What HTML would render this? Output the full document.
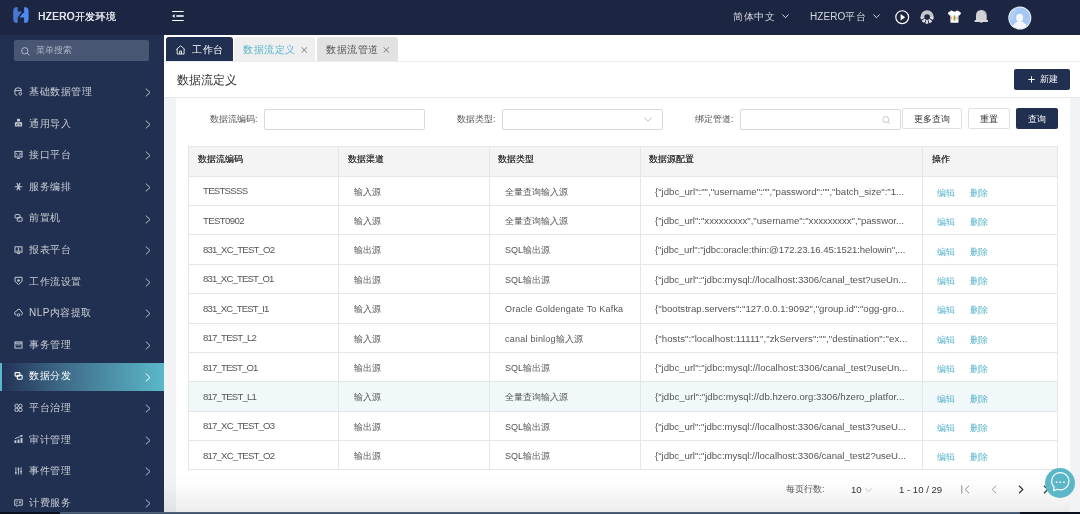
<!DOCTYPE html>
<html><head><meta charset="utf-8">
<style>
*{box-sizing:border-box;margin:0;padding:0}
html,body{width:1080px;height:514px;overflow:hidden;background:#fff;font-family:"Liberation Sans",sans-serif;}
.a{position:absolute}
.t{position:absolute;white-space:nowrap;line-height:1;will-change:transform}
#hdr{left:0;top:0;width:1080px;height:34.5px;background:#1c2541}
#side{left:0;top:34.5px;width:164px;height:480px;background:#213050}
.mi{position:absolute;left:0;width:164px;height:28.5px}
.mi .tx{position:absolute;will-change:transform;left:29px;top:-0.2px;line-height:28.5px;font-size:10px;letter-spacing:0.5px;color:#c9cdd6;white-space:nowrap}
.mi svg.ic{position:absolute;left:13.5px;top:8.7px}
.mi svg.ar{position:absolute;left:145px;top:10px}
.mi.act{background:linear-gradient(90deg,#223154 0%,#3f6d8a 40%,#5bb8ca 100%)}
.mi.act:before{content:"";position:absolute;left:0;top:0;width:2px;height:100%;background:#5ab8cc}
.mi.act .tx{color:#fff}
</style></head><body>
<!-- HEADER -->
<div id="hdr" class="a">
  <svg class="a" style="left:13px;top:7px" width="16" height="16" viewBox="0 0 16 16">
    <path d="M4.7,0.2 V4.5 H8.9 L5.2,10 H4.7 V15.8 H2.4 Q0.2,15 0.2,12.2 V3.8 Q0.2,1 2.4,0.2Z" fill="#4778d4"/>
    <path d="M11.1,0.2 H13.4 Q15.6,1 15.6,3.8 V12.2 Q15.6,15 13.4,15.8 H11.1 V10.4 H6.5 L10.1,5.9 H11.1Z" fill="#5089ee"/>
  </svg>
  <div class="t" style="left:37.5px;top:11.5px;font-size:10px;letter-spacing:0.35px;color:#e8eaf0;text-shadow:0.35px 0 0 #e8eaf0">HZERO开发环境</div>
  <svg class="a" style="left:172px;top:11px" width="12" height="11" viewBox="0 0 12 11">
    <rect x="0" y="0" width="11.8" height="1.1" rx="0.5" fill="#fff"/>
    <rect x="4.2" y="4.1" width="7.6" height="1.8" rx="0.4" fill="#cfd2da"/>
    <rect x="0" y="8.9" width="11.8" height="1.1" rx="0.5" fill="#fff"/>
    <path d="M0,5 L2.6,3.3 V6.7Z" fill="#fff"/>
  </svg>
  <div class="t" style="left:733px;top:11.5px;font-size:10px;letter-spacing:0.5px;color:#d4d8e0">简体中文</div>
  <svg class="a" style="left:781.5px;top:14px" width="7" height="5" viewBox="0 0 7 5"><path d="M0.5,0.5 L3.5,3.8 L6.5,0.5" stroke="#cfd3dc" stroke-width="1" fill="none"/></svg>
  <div class="t" style="left:810px;top:11.5px;font-size:10px;letter-spacing:0.1px;color:#d4d8e0">HZERO平台</div>
  <svg class="a" style="left:873px;top:14px" width="7" height="5" viewBox="0 0 7 5"><path d="M0.5,0.5 L3.5,3.8 L6.5,0.5" stroke="#cfd3dc" stroke-width="1" fill="none"/></svg>
  <!-- play -->
  <svg class="a" style="left:894px;top:8.5px" width="16" height="16" viewBox="0 0 16 16">
    <circle cx="8.2" cy="8.2" r="6.4" stroke="#fff" stroke-width="1.15" fill="none"/>
    <path d="M6.6,5.1 L11.2,8.3 L6.6,11.6Z" fill="#fff"/>
  </svg>
  <!-- ring -->
  <svg class="a" style="left:919px;top:8.5px" width="16" height="16" viewBox="0 0 16 16">
    <path d="M3.35,8 A4.75,4.75 0 0 1 12.85,8" stroke="#c3c6cc" stroke-width="3.8" fill="none"/>
    <path d="M12.85,8 A4.75,4.75 0 0 1 3.35,8" stroke="#dfe1e5" stroke-width="3.8" stroke-dasharray="2.3 0.85" fill="none"/>
  </svg>
  <!-- shirt -->
  <svg class="a" style="left:947px;top:10px" width="15" height="13" viewBox="0 0 15 13">
    <path d="M4.2,0.6 Q5,0.3 5.6,0.9 Q7.4,2.2 9.2,0.9 Q9.9,0.3 10.7,0.6 L13.6,2.6 Q14.3,3.1 13.8,3.8 L12.5,5.6 L11.5,5.2 V12.3 Q11.5,12.7 11,12.7 H4 Q3.4,12.7 3.4,12.2 V5.2 L2.4,5.6 L1.1,3.8 Q0.6,3.1 1.3,2.6Z" fill="#fff"/>
    <rect x="4.3" y="6.6" width="0.9" height="3" rx="0.45" fill="#ee8a8a"/>
    <rect x="5.9" y="5.9" width="1" height="4.4" rx="0.5" fill="#f3c35a"/>
    <rect x="7" y="5.1" width="1" height="6" rx="0.5" fill="#63c27a"/>
    <rect x="8.1" y="5.9" width="1" height="4.4" rx="0.5" fill="#f3c35a"/>
    <rect x="9.7" y="6.6" width="0.9" height="3" rx="0.45" fill="#ee8a8a"/>
  </svg>
  <!-- bell -->
  <svg class="a" style="left:974px;top:8.5px" width="15" height="15" viewBox="0 0 15 15">
    <path d="M6.6,1.2 Q7.3,0.3 8,1.2Z" fill="#d2d3d6"/>
    <path d="M2,11 V6.8 Q2,1.4 7.3,1.1 Q12.7,1.4 12.7,6.8 V11Z" fill="#d2d3d6"/>
    <path d="M0.6,11.1 H14 Q14.4,12.9 13.6,12.9 H1.1 Q0.2,12.9 0.6,11.1Z" fill="#d8d9dc"/>
    <path d="M6,13 Q7.3,14.7 8.7,13Z" fill="#d2d3d6"/>
    <path d="M9.8,2.4 Q11,3.2 11.4,4.8" stroke="#8d92a0" stroke-width="0.8" fill="none"/>
  </svg>
  <!-- avatar -->
  <svg class="a" style="left:1008px;top:6px" width="24" height="24" viewBox="0 0 24 24">
    <circle cx="11.8" cy="12" r="11.5" fill="#eef2f8"/>
    <circle cx="11.8" cy="12" r="10.6" fill="#a6c7f2"/>
    <path d="M2,9 Q4,3 10,1.5 Q6,6 6,12 Q4,14 2,14Z" fill="#b8d3f6" opacity="0.7"/>
    <ellipse cx="11.6" cy="11.8" rx="3.5" ry="4.1" fill="#f4f7fd"/>
    <path d="M4.8,20.5 Q5.8,16.6 10,15.4 L10.3,14.6 H13 L13.3,15.4 Q17.6,16.6 18.6,20.5 Q15.5,22.8 11.7,22.8 Q7.9,22.8 4.8,20.5Z" fill="#f4f7fd"/>
  </svg>
</div>

<!-- SIDEBAR -->
<div id="side" class="a">
  <div class="a" style="left:13.5px;top:5.5px;width:135.5px;height:21px;background:#485573;border-radius:2px"></div>
  <svg class="a" style="left:21px;top:12px" width="9" height="9" viewBox="0 0 9 9"><circle cx="3.8" cy="3.8" r="3.2" stroke="#b8bfcc" stroke-width="0.9" fill="none"/><path d="M6.1,6.1 L8.5,8.5" stroke="#b8bfcc" stroke-width="0.9"/></svg>
  <div class="t" style="left:36px;top:11.5px;font-size:9px;color:#aeb5c3">菜单搜索</div>
  <div class="mi" style="top:43.70px"><svg class="ic" width="9" height="9" viewBox="0 0 9 9"><path d="M7.4,4.3 V3.2 Q7.4,0.8 4.1,0.8 Q0.9,0.8 0.9,3.2 V6.2 Q0.9,8.3 3.2,8.3" stroke="#c3c8d3" stroke-width="1" fill="none"/><path d="M0.9,3.6 H7.4" stroke="#c3c8d3" stroke-width="1" fill="none"/><circle cx="6.3" cy="6.7" r="1.35" stroke="#c3c8d3" stroke-width="1" fill="none"/></svg><div class="tx">基础数据管理</div><svg class="ar" width="6" height="9" viewBox="0 0 6 9"><path d="M0.8,0.6 L5,4.5 L0.8,8.4" stroke="#b9bfcb" stroke-width="1" fill="none"/></svg></div>
<div class="mi" style="top:75.30px"><svg class="ic" width="9" height="9" viewBox="0 0 9 9"><rect x="2.9" y="0.8" width="3.2" height="2.8" rx="1" fill="#c3c8d3"/><path d="M0.9,8.4 V5.3 Q0.9,4 2.2,4 H6.8 Q8.1,4 8.1,5.3 V8.4Z" fill="#c3c8d3"/><circle cx="3" cy="6.8" r="0.75" fill="#213050"/><circle cx="6" cy="6.8" r="0.75" fill="#213050"/><path d="M2.8,5.1 H6.2" stroke="#213050" stroke-width="0.5"/></svg><div class="tx">通用导入</div><svg class="ar" width="6" height="9" viewBox="0 0 6 9"><path d="M0.8,0.6 L5,4.5 L0.8,8.4" stroke="#b9bfcb" stroke-width="1" fill="none"/></svg></div>
<div class="mi" style="top:106.90px"><svg class="ic" width="9" height="9" viewBox="0 0 9 9"><rect x="1" y="1.4" width="7" height="5.6" stroke="#c3c8d3" stroke-width="1" fill="none"/><path d="M3,8.4 H6" stroke="#c3c8d3" stroke-width="1" fill="none"/><path d="M2.4,3.2 L3.8,5.6 M5.9,2.6 V6.2 M6.9,3 V4.8" stroke="#c3c8d3" stroke-width="0.8"/></svg><div class="tx">接口平台</div><svg class="ar" width="6" height="9" viewBox="0 0 6 9"><path d="M0.8,0.6 L5,4.5 L0.8,8.4" stroke="#b9bfcb" stroke-width="1" fill="none"/></svg></div>
<div class="mi" style="top:138.50px"><svg class="ic" width="9" height="9" viewBox="0 0 9 9"><path d="M0.7,4.7 H8.3 M2.9,1.1 L4.5,4.7 L6.1,1.1 M2.9,8.3 L4.5,4.7 L6.1,8.3" stroke="#c3c8d3" stroke-width="1.15" fill="none"/></svg><div class="tx">服务编排</div><svg class="ar" width="6" height="9" viewBox="0 0 6 9"><path d="M0.8,0.6 L5,4.5 L0.8,8.4" stroke="#b9bfcb" stroke-width="1" fill="none"/></svg></div>
<div class="mi" style="top:170.10px"><svg class="ic" width="9" height="9" viewBox="0 0 9 9"><rect x="1.1" y="1.6" width="4.8" height="3.5" rx="0.6" stroke="#c3c8d3" stroke-width="1" fill="none"/><rect x="3.3" y="4.4" width="4.8" height="3.8" rx="0.6" stroke="#c3c8d3" stroke-width="1" fill="none"/></svg><div class="tx">前置机</div><svg class="ar" width="6" height="9" viewBox="0 0 6 9"><path d="M0.8,0.6 L5,4.5 L0.8,8.4" stroke="#b9bfcb" stroke-width="1" fill="none"/></svg></div>
<div class="mi" style="top:201.70px"><svg class="ic" width="9" height="9" viewBox="0 0 9 9"><rect x="1" y="1.8" width="7" height="5.4" stroke="#c3c8d3" stroke-width="1" fill="none"/><path d="M3,8.4 H6" stroke="#c3c8d3" stroke-width="1" fill="none"/><path d="M2.3,6 H6.7 M4.5,3.1 V6 M3.7,3.1 H5.3" stroke="#c3c8d3" stroke-width="0.8"/></svg><div class="tx">报表平台</div><svg class="ar" width="6" height="9" viewBox="0 0 6 9"><path d="M0.8,0.6 L5,4.5 L0.8,8.4" stroke="#b9bfcb" stroke-width="1" fill="none"/></svg></div>
<div class="mi" style="top:233.30px"><svg class="ic" width="9" height="9" viewBox="0 0 9 9"><path d="M1,1.3 H8 V5.3 L4.5,8.5 L1,5.3Z" stroke="#c3c8d3" stroke-width="1" fill="none"/><circle cx="4.5" cy="4.5" r="1.3" fill="#c3c8d3"/></svg><div class="tx">工作流设置</div><svg class="ar" width="6" height="9" viewBox="0 0 6 9"><path d="M0.8,0.6 L5,4.5 L0.8,8.4" stroke="#b9bfcb" stroke-width="1" fill="none"/></svg></div>
<div class="mi" style="top:264.90px"><svg class="ic" width="9" height="9" viewBox="0 0 9 9"><path d="M2.3,7.2 Q0.4,6.7 0.6,4.8 Q0.9,3.4 2.5,3.2 Q3.2,1.1 5,1.2 Q6.8,1.5 7,3.4 Q8.6,3.9 8.4,5.6 Q8.2,6.9 7.1,7.2" stroke="#c3c8d3" stroke-width="1" fill="none"/><circle cx="4.5" cy="6.9" r="1.25" stroke="#c3c8d3" stroke-width="1" fill="none"/></svg><div class="tx">NLP内容提取</div><svg class="ar" width="6" height="9" viewBox="0 0 6 9"><path d="M0.8,0.6 L5,4.5 L0.8,8.4" stroke="#b9bfcb" stroke-width="1" fill="none"/></svg></div>
<div class="mi" style="top:296.50px"><svg class="ic" width="9" height="9" viewBox="0 0 9 9"><rect x="1" y="1.9" width="7" height="6.2" stroke="#c3c8d3" stroke-width="1" fill="none"/><path d="M1,3.2 H8" stroke="#c3c8d3" stroke-width="1" fill="none"/><path d="M2.3,4.9 H6.7" stroke="#c3c8d3" stroke-width="0.8"/></svg><div class="tx">事务管理</div><svg class="ar" width="6" height="9" viewBox="0 0 6 9"><path d="M0.8,0.6 L5,4.5 L0.8,8.4" stroke="#b9bfcb" stroke-width="1" fill="none"/></svg></div>
<div class="mi act" style="top:328.10px"><svg class="ic" width="9" height="9" viewBox="0 0 9 9"><rect x="1.1" y="1.6" width="4.8" height="3.5" rx="0.6" stroke="#fff" stroke-width="1.1" fill="none"/><rect x="3.3" y="4.4" width="4.8" height="3.8" rx="0.6" stroke="#fff" stroke-width="1.1" fill="none"/></svg><div class="tx">数据分发</div><svg class="ar" width="6" height="9" viewBox="0 0 6 9"><path d="M0.8,0.6 L5,4.5 L0.8,8.4" stroke="#fff" stroke-width="1" fill="none"/></svg></div>
<div class="mi" style="top:359.70px"><svg class="ic" width="9" height="9" viewBox="0 0 9 9"><circle cx="2.6" cy="2.9" r="1.75" stroke="#c3c8d3" stroke-width="1" fill="none"/><circle cx="6.4" cy="2.9" r="1.75" stroke="#c3c8d3" stroke-width="1" fill="none"/><circle cx="2.6" cy="6.9" r="1.75" stroke="#c3c8d3" stroke-width="1" fill="none"/><circle cx="6.4" cy="6.9" r="1.75" stroke="#c3c8d3" stroke-width="1" fill="none"/></svg><div class="tx">平台治理</div><svg class="ar" width="6" height="9" viewBox="0 0 6 9"><path d="M0.8,0.6 L5,4.5 L0.8,8.4" stroke="#b9bfcb" stroke-width="1" fill="none"/></svg></div>
<div class="mi" style="top:391.30px"><svg class="ic" width="9" height="9" viewBox="0 0 9 9"><path d="M1.4,9 V6.3 M4.5,9 V5.4 M7.5,9 V4" stroke="#c3c8d3" stroke-width="1.9"/><path d="M1,4.8 Q3,3.4 6,2.8" stroke="#c3c8d3" stroke-width="1" fill="none"/><path d="M6.3,1 H8.4 V2.8 H6.3Z" fill="#c3c8d3"/></svg><div class="tx">审计管理</div><svg class="ar" width="6" height="9" viewBox="0 0 6 9"><path d="M0.8,0.6 L5,4.5 L0.8,8.4" stroke="#b9bfcb" stroke-width="1" fill="none"/></svg></div>
<div class="mi" style="top:422.90px"><svg class="ic" width="9" height="9" viewBox="0 0 9 9"><path d="M1.9,1.3 V8.6 M4.5,1.3 V8.6 M7.1,1.3 V8.6" stroke="#c3c8d3" stroke-width="0.9"/><path d="M0.8,6.7 L1.9,5.7 L3,6.7 L1.9,7.7Z M5.9,5.7 L7.1,4.7 L8.2,5.7 L7.1,6.7Z" fill="#c3c8d3"/><rect x="3.6" y="2" width="1.8" height="2.2" rx="0.8" fill="#c3c8d3"/></svg><div class="tx">事件管理</div><svg class="ar" width="6" height="9" viewBox="0 0 6 9"><path d="M0.8,0.6 L5,4.5 L0.8,8.4" stroke="#b9bfcb" stroke-width="1" fill="none"/></svg></div>
<div class="mi" style="top:454.50px"><svg class="ic" width="9" height="9" viewBox="0 0 9 9"><path d="M0.7,1.8 H8.3 V7.2 H4.2 L3,8.4 L2.4,7.2 H0.7Z" stroke="#c3c8d3" stroke-width="1" fill="none"/><path d="M2.1,3.7 H3.7 M2.1,5.3 H3.7" stroke="#c3c8d3" stroke-width="0.8"/><path d="M5.9,3 Q6.8,3 6.8,3.9 Q6.8,4.8 5.9,6 Q5,4.8 5,3.9 Q5,3 5.9,3Z" fill="#c3c8d3"/></svg><div class="tx">计费服务</div><svg class="ar" width="6" height="9" viewBox="0 0 6 9"><path d="M0.8,0.6 L5,4.5 L0.8,8.4" stroke="#b9bfcb" stroke-width="1" fill="none"/></svg></div>
</div>

<!-- TABS -->
<div class="a" style="left:166px;top:37px;width:66.5px;height:24px;background:#213050;border-radius:3px 3px 0 0"></div>
<svg class="a" style="left:176px;top:44.5px" width="10" height="10" viewBox="0 0 10 10"><path d="M0.3,4.5 L4.6,0.7 L8.9,4.5" stroke="#fff" stroke-width="0.85" fill="none" stroke-linejoin="round"/><path d="M1.2,4 V9 H8.1 V4 M3.7,9 V6 H5.5 V9" stroke="#fff" stroke-width="0.85" fill="none"/></svg>
<div class="t" style="left:192px;top:45px;font-size:10px;letter-spacing:0.5px;color:#fff">工作台</div>
<div class="a" style="left:234px;top:37px;width:81px;height:24px;background:#efefef;border-radius:3px 3px 0 0"></div>
<div class="t" style="left:243px;top:45px;font-size:10px;letter-spacing:0.5px;color:#5ab6cb">数据流定义</div>
<svg class="a" style="left:300.8px;top:47px" width="6.5" height="6" viewBox="0 0 6.5 6"><path d="M0.5,0.3 L6,5.7 M6,0.3 L0.5,5.7" stroke="#777" stroke-width="0.9"/></svg>
<div class="a" style="left:317px;top:37px;width:81px;height:24px;background:#e2e2e2;border-radius:3px 3px 0 0"></div>
<div class="t" style="left:326px;top:45px;font-size:10px;letter-spacing:0.5px;color:#555">数据流管道</div>
<svg class="a" style="left:383.3px;top:47px" width="6.5" height="6" viewBox="0 0 6.5 6"><path d="M0.5,0.3 L6,5.7 M6,0.3 L0.5,5.7" stroke="#777" stroke-width="0.9"/></svg>
<div class="a" style="left:164px;top:61px;width:916px;height:1px;background:#ececec"></div>

<!-- PAGE HEADER -->
<div class="t" style="left:176.5px;top:74px;font-size:12px;color:#333">数据流定义</div>
<div class="a" style="left:1014px;top:69px;width:56px;height:21px;background:#213050;border-radius:2px"></div>
<svg class="a" style="left:1028px;top:75.5px" width="7" height="7" viewBox="0 0 7 7"><path d="M3.5,0.3 V6.7 M0.3,3.5 H6.7" stroke="#fff" stroke-width="1"/></svg>
<div class="t" style="left:1040px;top:75px;font-size:9px;color:#fff">新建</div>
<div class="a" style="left:164px;top:97px;width:916px;height:1px;background:#e8e8e8"></div>
<div class="a" style="left:164px;top:98px;width:12px;height:414px;background:#f2f3f5"></div>
<div class="a" style="left:1070px;top:98px;width:10px;height:414px;background:#f2f3f5"></div>

<!-- FILTERS -->
<div class="t" style="left:210px;top:114.5px;font-size:9px;color:#555">数据流编码:</div>
<div class="a" style="left:264px;top:109px;width:161px;height:21px;border:1px solid #d9d9d9;border-radius:2px"></div>
<div class="t" style="left:457px;top:114.5px;font-size:9px;color:#555">数据类型:</div>
<div class="a" style="left:502px;top:109px;width:161px;height:21px;border:1px solid #d9d9d9;border-radius:2px"></div>
<svg class="a" style="left:644px;top:117px" width="8" height="5" viewBox="0 0 8 5"><path d="M0.5,0.5 L4,4.2 L7.5,0.5" stroke="#bbb" stroke-width="0.9" fill="none"/></svg>
<div class="t" style="left:695px;top:114.5px;font-size:9px;color:#555">绑定管道:</div>
<div class="a" style="left:740px;top:109px;width:160.5px;height:21px;border:1px solid #d9d9d9;border-radius:2px"></div>
<svg class="a" style="left:881.5px;top:115.5px" width="9" height="8" viewBox="0 0 9 8"><circle cx="3.8" cy="3.6" r="3" stroke="#bbb" stroke-width="0.8" fill="none"/><path d="M6,5.8 L8,7.8" stroke="#bbb" stroke-width="0.8"/></svg>
<div class="a" style="left:902px;top:108px;width:60px;height:21px;border:1px solid #e0e0e0;border-radius:2px"></div>
<div class="t" style="left:914px;top:114.5px;font-size:9px;color:#333">更多查询</div>
<div class="a" style="left:968px;top:108px;width:42px;height:21px;border:1px solid #e0e0e0;border-radius:2px"></div>
<div class="t" style="left:980px;top:114.5px;font-size:9px;color:#333">重置</div>
<div class="a" style="left:1016px;top:108px;width:42px;height:21px;background:#213050;border-radius:2px"></div>
<div class="t" style="left:1028px;top:114.5px;font-size:9px;color:#fff">查询</div>

<div class="a" style="left:188px;top:146px;width:870px;height:29.5px;background:#f4f4f4"></div>
<div class="a" style="left:188px;top:381.30px;width:870px;height:29.40px;background:#f1f8fa"></div>
<div class="a" style="left:188px;top:146px;width:870px;height:324px;border:1px solid #e6e6e6"></div>
<div class="a" style="left:338px;top:146px;width:1px;height:324px;background:#e6e6e6"></div>
<div class="a" style="left:489px;top:146px;width:1px;height:324px;background:#e6e6e6"></div>
<div class="a" style="left:640px;top:146px;width:1px;height:324px;background:#e6e6e6"></div>
<div class="a" style="left:922px;top:146px;width:1px;height:324px;background:#e6e6e6"></div>
<div class="a" style="left:188px;top:175.50px;width:870px;height:1px;background:#e6e6e6"></div>
<div class="a" style="left:188px;top:204.90px;width:870px;height:1px;background:#e6e6e6"></div>
<div class="a" style="left:188px;top:234.30px;width:870px;height:1px;background:#e6e6e6"></div>
<div class="a" style="left:188px;top:263.70px;width:870px;height:1px;background:#e6e6e6"></div>
<div class="a" style="left:188px;top:293.10px;width:870px;height:1px;background:#e6e6e6"></div>
<div class="a" style="left:188px;top:322.50px;width:870px;height:1px;background:#e6e6e6"></div>
<div class="a" style="left:188px;top:351.90px;width:870px;height:1px;background:#e6e6e6"></div>
<div class="a" style="left:188px;top:381.30px;width:870px;height:1px;background:#e6e6e6"></div>
<div class="a" style="left:188px;top:410.70px;width:870px;height:1px;background:#e6e6e6"></div>
<div class="a" style="left:188px;top:440.10px;width:870px;height:1px;background:#e6e6e6"></div>
<div class="t" style="left:197.5px;top:155px;font-size:9px;color:#333;text-shadow:0.25px 0 0 #333">数据流编码</div>
<div class="t" style="left:348px;top:155px;font-size:9px;color:#333;text-shadow:0.25px 0 0 #333">数据渠道</div>
<div class="t" style="left:498.3px;top:155px;font-size:9px;color:#333;text-shadow:0.25px 0 0 #333">数据类型</div>
<div class="t" style="left:649.3px;top:155px;font-size:9px;color:#333;text-shadow:0.25px 0 0 #333">数据源配置</div>
<div class="t" style="left:931.5px;top:155px;font-size:9px;color:#333;text-shadow:0.25px 0 0 #333">操作</div>
<div class="t" style="left:203px;top:186.10px;font-size:9.6px;color:#555;letter-spacing:-0.725px">TESTSSSS</div>
<div class="t" style="left:353.8px;top:187.60px;font-size:9px;color:#555;letter-spacing:0.000px">输入源</div>
<div class="t" style="left:504.6px;top:187.60px;font-size:9px;color:#555;letter-spacing:0.029px">全量查询输入源</div>
<div class="t" style="left:655.2px;top:186.60px;font-size:9.6px;color:#555;letter-spacing:-0.007px">{"jdbc_url":"","username":"","password":"","batch_size":"1...</div>
<div class="t" style="left:937px;top:188.80px;font-size:9px;color:#5ab4cc">编辑</div>
<div class="t" style="left:970px;top:188.80px;font-size:9px;color:#5ab4cc">删除</div>
<div class="t" style="left:203px;top:215.50px;font-size:9.6px;color:#555;letter-spacing:-0.600px">TEST0902</div>
<div class="t" style="left:353.8px;top:217.00px;font-size:9px;color:#555;letter-spacing:0.000px">输入源</div>
<div class="t" style="left:504.6px;top:217.00px;font-size:9px;color:#555;letter-spacing:0.029px">全量查询输入源</div>
<div class="t" style="left:655.2px;top:216.00px;font-size:9.6px;color:#555;letter-spacing:-0.024px">{"jdbc_url":"xxxxxxxxx","username":"xxxxxxxxx","passwor...</div>
<div class="t" style="left:937px;top:218.20px;font-size:9px;color:#5ab4cc">编辑</div>
<div class="t" style="left:970px;top:218.20px;font-size:9px;color:#5ab4cc">删除</div>
<div class="t" style="left:203px;top:244.90px;font-size:9.6px;color:#555;letter-spacing:-0.814px">831_XC_TEST_O2</div>
<div class="t" style="left:353.8px;top:246.40px;font-size:9px;color:#555;letter-spacing:0.000px">输出源</div>
<div class="t" style="left:504.6px;top:246.40px;font-size:9px;color:#555;letter-spacing:-0.017px">SQL输出源</div>
<div class="t" style="left:655.2px;top:245.40px;font-size:9.6px;color:#555;letter-spacing:-0.093px">{"jdbc_url":"jdbc:oracle:thin:@172.23.16.45:1521:helowin",...</div>
<div class="t" style="left:937px;top:247.60px;font-size:9px;color:#5ab4cc">编辑</div>
<div class="t" style="left:970px;top:247.60px;font-size:9px;color:#5ab4cc">删除</div>
<div class="t" style="left:203px;top:274.30px;font-size:9.6px;color:#555;letter-spacing:-0.871px">831_XC_TEST_O1</div>
<div class="t" style="left:353.8px;top:275.80px;font-size:9px;color:#555;letter-spacing:0.000px">输出源</div>
<div class="t" style="left:504.6px;top:275.80px;font-size:9px;color:#555;letter-spacing:-0.017px">SQL输出源</div>
<div class="t" style="left:655.2px;top:274.80px;font-size:9.6px;color:#555;letter-spacing:-0.018px">{"jdbc_url":"jdbc:mysql://localhost:3306/canal_test?useUn...</div>
<div class="t" style="left:937px;top:277.00px;font-size:9px;color:#5ab4cc">编辑</div>
<div class="t" style="left:970px;top:277.00px;font-size:9px;color:#5ab4cc">删除</div>
<div class="t" style="left:203px;top:303.70px;font-size:9.6px;color:#555;letter-spacing:-0.886px">831_XC_TEST_I1</div>
<div class="t" style="left:353.8px;top:305.20px;font-size:9px;color:#555;letter-spacing:0.000px">输入源</div>
<div class="t" style="left:504.6px;top:305.20px;font-size:9px;color:#555;letter-spacing:0.208px">Oracle Goldengate To Kafka</div>
<div class="t" style="left:655.2px;top:304.20px;font-size:9.6px;color:#555;letter-spacing:0.010px">{"bootstrap.servers":"127.0.0.1:9092","group.id":"ogg-gro...</div>
<div class="t" style="left:937px;top:306.40px;font-size:9px;color:#5ab4cc">编辑</div>
<div class="t" style="left:970px;top:306.40px;font-size:9px;color:#5ab4cc">删除</div>
<div class="t" style="left:203px;top:333.10px;font-size:9.6px;color:#555;letter-spacing:-0.809px">817_TEST_L2</div>
<div class="t" style="left:353.8px;top:334.60px;font-size:9px;color:#555;letter-spacing:0.000px">输入源</div>
<div class="t" style="left:504.6px;top:334.60px;font-size:9px;color:#555;letter-spacing:0.233px">canal binlog输入源</div>
<div class="t" style="left:655.2px;top:333.60px;font-size:9.6px;color:#555;letter-spacing:0.065px">{"hosts":"localhost:11111","zkServers":"","destination":"ex...</div>
<div class="t" style="left:937px;top:335.80px;font-size:9px;color:#5ab4cc">编辑</div>
<div class="t" style="left:970px;top:335.80px;font-size:9px;color:#5ab4cc">删除</div>
<div class="t" style="left:203px;top:362.50px;font-size:9.6px;color:#555;letter-spacing:-0.855px">817_TEST_O1</div>
<div class="t" style="left:353.8px;top:364.00px;font-size:9px;color:#555;letter-spacing:0.000px">输出源</div>
<div class="t" style="left:504.6px;top:364.00px;font-size:9px;color:#555;letter-spacing:-0.017px">SQL输出源</div>
<div class="t" style="left:655.2px;top:363.00px;font-size:9.6px;color:#555;letter-spacing:0.000px">{"jdbc_url":"jdbc:mysql://localhost:3306/canal_test?useUn...</div>
<div class="t" style="left:937px;top:365.20px;font-size:9px;color:#5ab4cc">编辑</div>
<div class="t" style="left:970px;top:365.20px;font-size:9px;color:#5ab4cc">删除</div>
<div class="t" style="left:203px;top:391.90px;font-size:9.6px;color:#555;letter-spacing:-0.791px">817_TEST_L1</div>
<div class="t" style="left:353.8px;top:393.40px;font-size:9px;color:#555;letter-spacing:0.000px">输入源</div>
<div class="t" style="left:504.6px;top:393.40px;font-size:9px;color:#555;letter-spacing:0.029px">全量查询输入源</div>
<div class="t" style="left:655.2px;top:392.40px;font-size:9.6px;color:#555;letter-spacing:0.040px">{"jdbc_url":"jdbc:mysql://db.hzero.org:3306/hzero_platfor...</div>
<div class="t" style="left:937px;top:394.60px;font-size:9px;color:#5ab4cc">编辑</div>
<div class="t" style="left:970px;top:394.60px;font-size:9px;color:#5ab4cc">删除</div>
<div class="t" style="left:203px;top:421.30px;font-size:9.6px;color:#555;letter-spacing:-0.814px">817_XC_TEST_O3</div>
<div class="t" style="left:353.8px;top:422.80px;font-size:9px;color:#555;letter-spacing:0.000px">输出源</div>
<div class="t" style="left:504.6px;top:422.80px;font-size:9px;color:#555;letter-spacing:-0.017px">SQL输出源</div>
<div class="t" style="left:655.2px;top:421.80px;font-size:9.6px;color:#555;letter-spacing:-0.023px">{"jdbc_url":"jdbc:mysql://localhost:3306/canal_test3?useU...</div>
<div class="t" style="left:937px;top:424.00px;font-size:9px;color:#5ab4cc">编辑</div>
<div class="t" style="left:970px;top:424.00px;font-size:9px;color:#5ab4cc">删除</div>
<div class="t" style="left:203px;top:450.70px;font-size:9.6px;color:#555;letter-spacing:-0.814px">817_XC_TEST_O2</div>
<div class="t" style="left:353.8px;top:452.20px;font-size:9px;color:#555;letter-spacing:0.000px">输出源</div>
<div class="t" style="left:504.6px;top:452.20px;font-size:9px;color:#555;letter-spacing:-0.017px">SQL输出源</div>
<div class="t" style="left:655.2px;top:451.20px;font-size:9.6px;color:#555;letter-spacing:-0.023px">{"jdbc_url":"jdbc:mysql://localhost:3306/canal_test2?useU...</div>
<div class="t" style="left:937px;top:453.40px;font-size:9px;color:#5ab4cc">编辑</div>
<div class="t" style="left:970px;top:453.40px;font-size:9px;color:#5ab4cc">删除</div>

<!-- PAGINATION -->
<div class="a" style="left:164px;top:471px;width:906px;height:41px;background:linear-gradient(180deg,rgba(0,0,0,0) 0%,rgba(0,0,0,0.01) 35%,rgba(0,0,0,0.075) 100%)"></div>
<div class="t" style="left:786px;top:485px;font-size:9px;color:#555">每页行数:</div>
<div class="t" style="left:851px;top:484.7px;font-size:9.6px;color:#333">10</div>
<svg class="a" style="left:865px;top:487.5px" width="7" height="5" viewBox="0 0 7 5"><path d="M0.5,0.5 L3.5,3.8 L6.5,0.5" stroke="#bbb" stroke-width="0.8" fill="none"/></svg>
<div class="t" style="left:899px;top:484.7px;font-size:9.6px;color:#333">1 - 10 / 29</div>
<svg class="a" style="left:961px;top:485px" width="10" height="9" viewBox="0 0 10 9"><path d="M0.8,0.5 V8.5 M8,0.8 L4.2,4.5 L8,8.2" stroke="#888" stroke-width="1" fill="none"/></svg>
<svg class="a" style="left:990.5px;top:485px" width="6" height="9" viewBox="0 0 6 9"><path d="M5,0.8 L1.2,4.5 L5,8.2" stroke="#999" stroke-width="1" fill="none"/></svg>
<svg class="a" style="left:1017.5px;top:485px" width="6" height="9" viewBox="0 0 6 9"><path d="M1,0.8 L4.8,4.5 L1,8.2" stroke="#333" stroke-width="1.2" fill="none"/></svg>
<svg class="a" style="left:1042.5px;top:485px" width="10" height="9" viewBox="0 0 10 9"><path d="M1,0.8 L4.8,4.5 L1,8.2 M9,0.5 V8.5" stroke="#333" stroke-width="1.2" fill="none"/></svg>
<div class="a" style="left:0;top:511.8px;width:60px;height:2.2px;background:#0c1120"></div><div class="a" style="left:60px;top:511.8px;width:960px;height:2.2px;background:linear-gradient(180deg,#5a6b80,#34465e)"></div><div class="a" style="left:1020px;top:511.8px;width:60px;height:2.2px;background:#0c1120"></div>
<!-- chat -->
<svg class="a" style="left:1045px;top:468.2px" width="30" height="30" viewBox="0 0 30 30">
  <circle cx="15" cy="15" r="15" fill="#5bb7c8"/>
  <path d="M9.22,19.28 A8.6,8.6 0 1 1 12.36,21.28 L8.6,22.7 Z" stroke="#fff" stroke-width="1.2" stroke-linejoin="round" fill="none"/>
  <circle cx="11.6" cy="14.2" r="0.85" fill="#fff"/><circle cx="15.3" cy="14.2" r="0.85" fill="#fff"/><circle cx="19" cy="14.2" r="0.85" fill="#fff"/>
</svg>

</body></html>
